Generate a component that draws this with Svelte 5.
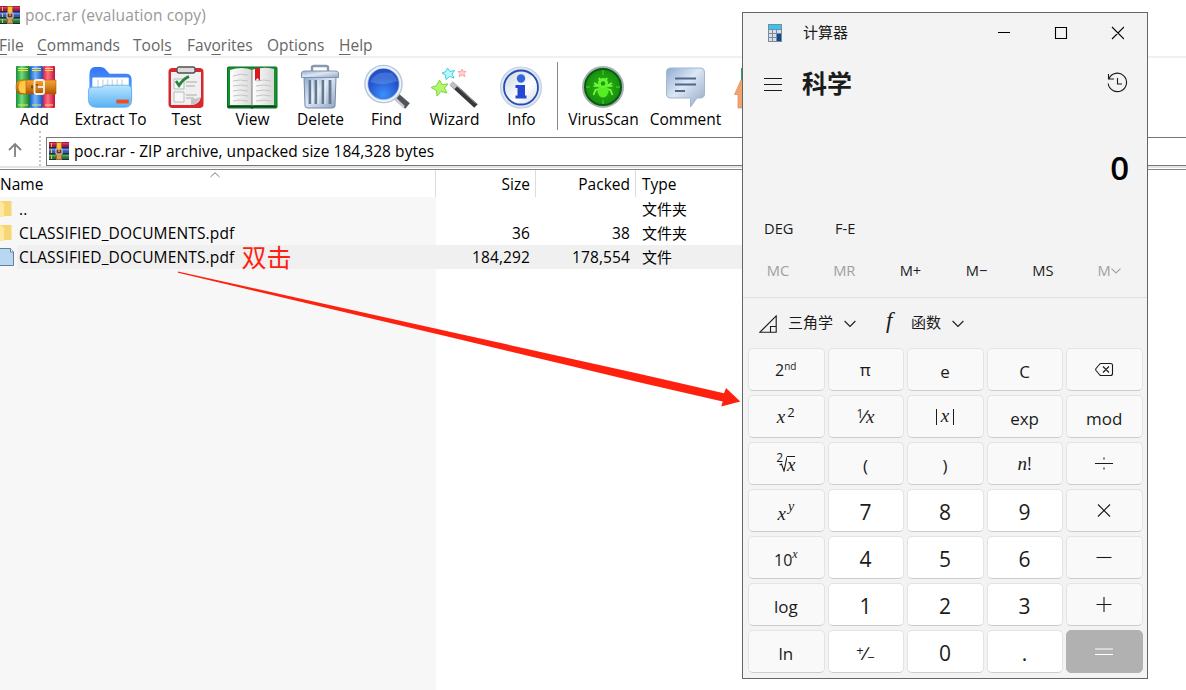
<script>
  const menu = [
    ['', 'F', 'ile', 38], ['', 'C', 'ommands', 96], ['Tool', 's', '', 54],
    ['Fav', 'o', 'rites', 80], ['Opti', 'o', 'ns', 72], ['', 'H', 'elp', 60],
  ];
  const tools = [
    { n: 'Add', w: 68 }, { n: 'Extract To', w: 84 }, { n: 'Test', w: 68 }, { n: 'View', w: 64 },
    { n: 'Delete', w: 72 }, { n: 'Find', w: 60 }, { n: 'Wizard', w: 76 }, { n: 'Info', w: 58 },
    { n: '|', w: 8 }, { n: 'VirusScan', w: 90 }, { n: 'Comment', w: 74 }, { n: '', w: 70 },
  ];
  const files = [
    { name: '..', size: '', packed: '', type: '文件夹', dir: true },
    { name: 'CLASSIFIED_DOCUMENTS.pdf', size: '36', packed: '38', type: '文件夹', dir: true },
    { name: 'CLASSIFIED_DOCUMENTS.pdf', size: '184,292', packed: '178,554', type: '文件', dir: false },
  ];
  const keys = [
    '2nd', 'π', 'e', 'C', 'back',
    'sq', 'inv', 'abs', 'exp', 'mod',
    'root', '(', ')', 'fact', 'div',
    'pow', '7', '8', '9', 'mul',
    'ten', '4', '5', '6', 'sub',
    'log', '1', '2', '3', 'add',
    'ln', 'neg', '0', '.', 'eq',
  ];
  const isNum = (k) => /^[0-9.]$/.test(k) || k === 'neg';
  const ops = {
    back: 'M9 4.5H18.5Q20.5 4.5 20.5 6V14.5Q20.5 16.5 18.5 16.5H9Q8.300 16.5 7.800 16L4 11.500Q3.300 10.500 4 9.500L7.800 5Q8.300 4.500 9 4.5ZM11 7.5L17 13.5M17 7.5L11 13.5',
    div: 'M3 10.5H21M12 4.4V6.4M12 14.6V16.6',
    mul: 'M6 4.5L18 16.5M18 4.5L6 16.5',
    sub: 'M4.5 10.5H19.5',
    add: 'M4.5 10.5H19.5M12 3V18',
    eq: 'M3 8H21M3 13.5H21',
  };
</script>

{#snippet books()}
  <svg class="books" viewBox="0 0 20 18">
    <rect width="20" height="6" fill="#a51845" /><rect y="1" width="20" height="1.5" fill="#d03867" />
    <rect y="6" width="20" height="6" fill="#3659b6" /><rect y="7" width="20" height="1.5" fill="#668de0" />
    <rect y="12" width="20" height="6" fill="#217537" /><rect y="13" width="20" height="1.5" fill="#58a55b" />
    <path d="M0 5.5H20M0 11.5H20M0 17.5H20" stroke="#222442" />
    <path d="M2.5 1V5M2.5 7V11M2.5 13V17" stroke="#efc438" />
    <rect x="7" y="0" width="6" height="18" fill="#a7662a" /><path d="M8 1H12V6H8Z" fill="#ffc629" />
    <path d="M7 7H13V12H7Z" fill="#6e371c" stroke="#ddd" /><path d="M10 6V10M8 14H12M8 16H12" stroke="#f5d28d" />
  </svg>
{/snippet}

{#snippet toolIcon(n)}
  <svg class="ticon" viewBox="0 0 48 44">
    {#if n === 'Add'}
      <rect x="6" y="1" width="14" height="42" rx="1" fill="url(#gr)" />
      <rect x="20" y="1" width="13" height="42" rx="1" fill="url(#bl)" />
      <rect x="33" y="1" width="12" height="42" rx="1" fill="url(#rd)" />
      <path d="M8 3.500H18M22 3.500H31M35 3.500H43M8 5.500H18M22 5.500H31M35 5.500H43M8 40H18M22 40H31M35 40H43" stroke="#f8df4b" stroke-width="1" />
      <path d="M10 15H46V29H10Q6 28 6 22Q6 16 10 15Z" fill="url(#or)" stroke="#ad610b" stroke-width=".6" />
      <path d="M10 16Q6 22 10 28L16 29V15Z" fill="#ffcb45" stroke="#a75d0d" stroke-width=".6" />
      <rect x="24.5" y="15" width="9.500" height="14" rx="2" fill="none" stroke="#f7eee0" stroke-width="1.900" />
      <path d="M28 22H35" stroke="#efefef" stroke-width="1.800" /><path d="M22 20.500V23.500M27 19V20.500" stroke="#633c12" stroke-width="1.6" />
    {:else if n === 'Extract To'}
      <g transform="translate(1.500 1) scale(.96)">
        <path d="M2 9Q2 1 8 1H13Q18 1 20 5L23 8H40Q46 8 46 14V36H2Z" fill="url(#fold)" />
        <rect x="5" y="12" width="38" height="20" rx="1" fill="#fff" />
        <path d="M11 14V23M16 14V23M21 14V23M26 14V23M31 14V23M36 14V23" stroke="#d3dde5" stroke-width="1.600" />
        <path d="M1 25Q1 22 5 22H13Q16 22 18 20H41Q46 20 46 25V35Q46 43 39 43H9Q1 43 1 35Z" fill="url(#sky)" stroke="#4c9fe4" stroke-width=".7" />
        <rect x="30" y="35" width="13" height="4" fill="#f24b22" />
      </g>
    {:else if n === 'Test'}
      <rect x="6.500" y="3" width="35" height="40" rx="4" fill="#d8272d" />
      <path d="M9 7H39V32Q37 40 29 40H9Z" fill="#f0f0f0" /><path d="M39 32Q34 34 29 34L29 40Q36 39 39 32Z" fill="#c4c4c4" />
      <rect x="15" y="2" width="18" height="6" rx="2" fill="#ddd" stroke="#564c4d" stroke-width="1.3" />
      <path d="M12 14H22V24H12ZM12 27H22V37H12Z" fill="#f7f7f7" stroke="#bbb" />
      <path d="M24 17H35M24 21H33M24 30H35M24 33H32" stroke="#aaa" /><path d="M14 16L17 20.500Q21 14 27 11.500" fill="none" stroke="#24843c" stroke-width="2.800" />
    {:else if n === 'View'}
      <rect x="-.5" y="2" width="49.500" height="41" rx="1" fill="#15912d" stroke="#086e22" />
      <path d="M2 5Q14 1 24 5V40H2Z" fill="url(#page)" /><path d="M24 5Q35 1 46 4V40H24Z" fill="url(#page)" />
      <path d="M0 41.500H23L24 43L26 41.500H48" fill="none" stroke="#163c1c" stroke-width="1.500" />
      <path d="M5 11Q12 8 20 10M5 16Q12 14 20 16M5 21Q12 19 20 21M5 26Q12 24 20 26M5 31Q12 29 20 31M5 36Q12 34 20 36M28 16Q36 14 43 16M28 21Q36 19 43 21M28 26Q36 24 43 26M28 31Q36 29 43 31M28 36Q36 34 43 36" fill="none" stroke="#c4c4c4" />
      <path d="M24 5V40" stroke="#777" /><path d="M27 3H32V16L29.5 13L27 16Z" fill="#d71920" />
    {:else if n === 'Delete'}
      <path d="M16 6V2.500Q16 1 18 1H30Q32 1 32 2.500V6" fill="none" stroke="#8997ad" stroke-width="2.400" />
      <path d="M8 12H40L39 41Q39 43 36 43H12Q9 43 9 41Z" fill="url(#steel)" stroke="#778aa2" />
      <path d="M14 15V39M20 15V39M27 15V39M34 15V39" stroke="#65788d" stroke-width="2.800" /><path d="M16 15V39M22 15V39M29 15V39" stroke="#f7fbff" />
      <path d="M5.500 8Q5.500 6 9 6H39Q42.500 6 42.500 8V12.500H5.500Z" fill="url(#steel)" stroke="#8393a9" />
    {:else if n === 'Find'}
      <path d="M34 31L45.500 41" stroke="#505358" stroke-width="7" /><path d="M33 33.500L42 42" stroke="#c8c9cc" stroke-width="2.500" />
      <circle cx="21.500" cy="19" r="17.3" fill="url(#lens)" stroke="#b3c6da" stroke-width="4" /><circle cx="21.500" cy="19" r="17" fill="none" stroke="#ebf4ff" stroke-width="1.8" />
      <path d="M8 17Q13 5 30 8L36 16Q22 22 8 17Z" fill="#86baff" opacity=".3" />
    {:else if n === 'Wizard'}
      <path d="M22 19L46 41" stroke="#37383b" stroke-width="5" /><path d="M23 17.500L46 38.500" stroke="#9b9b9b" /><path d="M21 18L26 22.500" stroke="#bec1c4" stroke-width="5" />
      <path d="M9.500 15L12 19.500L18 19L14.500 23L17 28L11 26.500L7 31L6.500 25.500L1 22.500L6.500 20.500Z" fill="#b6f56c" stroke="#76d83e" />
      <path d="M17.500 3L20 6.500L24.500 5.500L22 9L24 13L19.500 11.500L16 14.500L15.500 10L12 8L16 6.500Z" fill="#b6faff" stroke="#45cedc" />
      <path d="M32 4L33.200 6.500L36 6.500L34 8.500L35 11.500L32 10L29 11.500L30 8.500L28 6.500L31 6.500Z" fill="#ffd4d4" stroke="#ffa0a2" />
    {:else if n === 'Info'}
      <circle cx="24" cy="22.500" r="20.500" fill="#dfe7ef" stroke="#c4d0dc" stroke-width="1.2" /><circle cx="24" cy="22.500" r="17" fill="url(#pearl)" stroke="#254eb9" stroke-width="1.8" />
      <circle cx="24" cy="13.500" r="4.2" fill="#3567dc" /><path d="M18.500 20H28V30.500H29.500V33.500H18.500V30.500H20.500V23H18.500Z" fill="#2547d4" />
    {:else if n === 'VirusScan'}
      <circle cx="24" cy="22" r="19.2" fill="url(#virus)" stroke="#a8afb5" stroke-width="3.600" /><circle cx="24" cy="22" r="18" fill="none" stroke="#075e09" stroke-width="2" />
      <path d="M24 5V10M24 35V39M7 22H11M37 22H41" stroke="#48d334" />
      <path d="M20 13L21.500 16M28 13L26.500 16M15 18L20 21H14.500M14.500 30L16.500 25L20 24M33 18L28 21H33.500M33.500 30L31.500 25L28 24" stroke="#74ff39" stroke-width="1.700" fill="none" />
      <ellipse cx="24" cy="26" rx="5.500" ry="6.500" fill="#56ed24" /><circle cx="24" cy="18" r="5" fill="#65f52e" /><circle cx="24" cy="18.500" r="2.200" fill="#259716" />
    {:else if n === 'Comment'}
      <path d="M9 3H40Q43.500 3 43.500 7V29Q43.500 33 39 33H36L29.500 42V33H9Q5.500 33 5.500 29V7Q5.500 3 9 3Z" fill="url(#steel)" stroke="#a3b7d0" />
      <path d="M14 13.500H35M14 19.500H35M14 26H24" stroke="#50678a" stroke-width="1.800" />
    {:else}
      <rect x="8" y="3" width="15" height="16" fill="#2fa15f" /><path d="M1.500 29.500L8 15H18V43H5V29.500Z" fill="#f3a36b" stroke="#d98a62" stroke-width=".7" />
    {/if}
  </svg>
{/snippet}

<div class="desktop">
  <svg class="defs" width="0" height="0" aria-hidden="true">
    <defs>
      <linearGradient id="gr"><stop stop-color="#128f35" /><stop offset=".4" stop-color="#71dc7c" /><stop offset="1" stop-color="#11752e" /></linearGradient>
      <linearGradient id="bl"><stop stop-color="#1760cf" /><stop offset=".4" stop-color="#72b5ff" /><stop offset="1" stop-color="#1550b9" /></linearGradient>
      <linearGradient id="rd"><stop stop-color="#db1d4b" /><stop offset=".4" stop-color="#ff7186" /><stop offset="1" stop-color="#bd1339" /></linearGradient>
      <linearGradient id="or" x2="0" y2="1"><stop stop-color="#f7a432" /><stop offset=".5" stop-color="#d98219" /><stop offset="1" stop-color="#a95108" /></linearGradient>
      <linearGradient id="fold" x2="0" y2="1"><stop stop-color="#3377f4" /><stop offset="1" stop-color="#61adff" /></linearGradient>
      <linearGradient id="sky" x2="0" y2="1"><stop stop-color="#b8e5ff" /><stop offset="1" stop-color="#58b1f3" /></linearGradient>
      <linearGradient id="page"><stop stop-color="#fff" /><stop offset="1" stop-color="#d8d8d8" /></linearGradient>
      <linearGradient id="steel" x2="1" y2="1"><stop stop-color="#8eabd0" /><stop offset=".45" stop-color="#dce7f5" /><stop offset="1" stop-color="#91a6c3" /></linearGradient>
      <radialGradient id="lens" cy=".8"><stop stop-color="#3b91ff" /><stop offset="1" stop-color="#2450c7" /></radialGradient>
      <linearGradient id="pearl" x2="1" y2="1"><stop stop-color="#c9d4df" /><stop offset=".6" stop-color="#fff" /><stop offset="1" stop-color="#cfd7dd" /></linearGradient>
      <radialGradient id="virus"><stop stop-color="#35b516" /><stop offset="1" stop-color="#118d0d" /></radialGradient>
    </defs>
  </svg>

  <section class="archive">
    <header class="title">{@render books()}<span>poc.rar (evaluation copy)</span></header>
    <nav class="menu">
      {#each menu as [a, u, b, w]}<span style:width="{w}px">{a}<u>{u}</u>{b}</span>{/each}
    </nav>
    <div class="toolbar">
      {#each tools as t}
        {#if t.n === '|'}<i class="sep"></i>
        {:else}<div class="tool" style:width="{t.w}px">{@render toolIcon(t.n)}<span>{t.n}</span></div>{/if}
      {/each}
    </div>
    <div class="address">
      <svg class="up" viewBox="0 0 16 16"><path d="M8 15V2M2 8L8 2L14 8" /></svg>
      <i class="grip"></i>
      <div class="path">{@render books()}<span>poc.rar - ZIP archive, unpacked size 184,328 bytes</span></div>
    </div>
    <div class="rule"></div>
    <div class="row head">
      <span class="hname">Name<svg viewBox="0 0 10 6"><path d="M.5 5L5 .7L9.5 5" /></svg></span>
      <span class="num">Size</span><span class="num">Packed</span><span class="type">Type</span>
    </div>
    <div class="list">
      {#each files as f}
        <div class="row" class:sel={!f.dir}>
          <span class="name">
            {#if f.dir}
              <svg class="ficon" viewBox="0 0 17 24"><path d="M0 4H11.5V19H0Z" fill="#f7d774" /><path d="M0 4L4 7V20H0Z" fill="#ffe9a2" /></svg>
            {:else}
              <svg class="ficon" viewBox="0 0 17 24"><path d="M-1 3.5H10.5L13.5 7V20.5H-1Z" fill="#b9d7f1" stroke="#61809b" /><path d="M10.5 3.5V7H13.5" fill="#fff" stroke="#61809b" /></svg>
            {/if}
            <b>{f.name}</b>{#if !f.dir}<em>双击</em>{/if}
          </span>
          <span class="num">{f.size}</span><span class="num">{f.packed}</span><span class="type cjk">{f.type}</span>
        </div>
      {/each}
    </div>
  </section>

  <svg class="arrow" viewBox="0 0 1186 690"><path d="M178 271.5L460 334L640 374L724 393.2L726 388L740.3 401.4L721.3 406.5L722.7 401.6L640 382.4L460 339.5L178 272.7Z" fill="#ff2110" /></svg>

  <section class="calc">
    <header class="cbar">
      <svg class="cicon" viewBox="0 0 14 18"><rect width="14" height="18" fill="#7c8b98" /><rect x="1" y="1" width="12" height="4" fill="#36c4f5" /><path d="M1 6H4V9H1ZM5 6H8V9H5ZM9 6H13V9H9ZM1 10H4V13H1ZM5 10H8V13H5ZM1 14H4V17H1ZM5 14H8V17H5Z" fill="#d6dfe7" /><path d="M9 10H13V17H9Z" fill="#0c4a94" /></svg>
      <span>计算器</span>
      <svg class="win" viewBox="0 0 126 14"><path d="M0 6.5H12M57.5 1.5H68.5V12.5H57.5ZM114 1L126 13M126 1L114 13" /></svg>
    </header>
    <div class="mode">
      <svg class="burger" viewBox="0 0 18 14"><path d="M0 1.5H18M0 7.5H18M0 13.5H18" /></svg>
      <h1>科学</h1>
      <svg class="hist" viewBox="0 0 21 21"><path d="M1.5 1V6H7M2 5.5A9.2 9.2 0 1 1 1.2 10.5M10.5 5V11H15" /></svg>
    </div>
    <div class="result">0</div>
    <div class="angle"><span>DEG</span><span>F-E</span></div>
    <div class="memory">
      <span class="off">MC</span><span class="off">MR</span><span>M+</span><span>M−</span><span>MS</span>
      <span class="off">M<svg viewBox="0 0 10 6"><path d="M.5 .7L5 5L9.5 .7" /></svg></span>
    </div>
    <div class="groups">
      <svg class="tri" viewBox="0 0 18 18"><path d="M.9 17.2L17.2 .9V17.2ZM11.5 17V11.5H17" /></svg>
      <span class="g1">三角学</span><svg class="chev" viewBox="0 0 12 8"><path d="M.6 1L6 6.5L11.4 1" /></svg>
      <i>f</i><span class="g2">函数</span><svg class="chev" viewBox="0 0 12 8"><path d="M.6 1L6 6.5L11.4 1" /></svg>
    </div>
    <div class="keys">
      {#each keys as k}
        <div class="key" class:white={isNum(k)} class:eq={k === 'eq'} class:low={['e', 'C', 'exp', 'mod', '(', ')', 'log', 'ln'].includes(k)}>
          {#if ops[k]}<svg class="op" viewBox="0 0 24 21"><path d={ops[k]} /></svg>
          {:else if k === '2nd'}<span class="m">2<sup class="nd">nd</sup></span>
          {:else if k === 'sq'}<span class="m"><i>x</i><sup class="two">2</sup></span>
          {:else if k === 'inv'}<span class="m inv"><sup>1</sup><s>/</s><i>x</i></span>
          {:else if k === 'abs'}<span class="m abs"><i>x</i></span>
          {:else if k === 'root'}<span class="m root"><sup>2</sup><svg viewBox="0 0 8 16"><path d="M.5 9L2.5 8L5 15L8 .8" /></svg><i class="bar">x</i></span>
          {:else if k === 'fact'}<span class="m fact"><i>n</i>!</span>
          {:else if k === 'pow'}<span class="m"><i>x</i><sup class="y"><i>y</i></sup></span>
          {:else if k === 'ten'}<span class="m">10<sup class="x"><i>x</i></sup></span>
          {:else if k === 'neg'}<span class="neg"><sup>+</sup><s>/</s><sub>−</sub></span>
          {:else}<span>{k}</span>{/if}
        </div>
      {/each}
    </div>
  </section>
</div>

<style>
  :global(body) { background: #fff; }
  .desktop { position: relative; width: 1186px; height: 690px; overflow: hidden; font: 15.5px/20px "Open Sans", "Noto Sans", "Noto Sans CJK SC", sans-serif; color: #000; white-space: nowrap; }
  .desktop * { box-sizing: border-box; }
  .defs { position: absolute; }
  svg { display: block; flex: none; }
  .archive { display: flex; flex-direction: column; height: 690px; }
  .books { width: 20px; height: 18px; }
  .title { display: flex; height: 30px; align-items: center; gap: 5px; color: #999; padding-bottom: 1px; }
  .title span { letter-spacing: .11px; }
  .menu { display: flex; height: 28px; padding: 6px 0 0; margin-left: -1px; color: #666; border-bottom: 2px solid #f0f0f0; }
  .menu span { margin-top: -1px; letter-spacing: .02px; }
  .menu u { text-underline-offset: 3px; text-decoration-thickness: 1px; }
  .toolbar { display: flex; height: 79px; padding-top: 6px; }
  .tool { display: flex; flex-direction: column; align-items: center; flex: none; }
  .tool span { padding-left: 1px; }
  .ticon { width: 48px; height: 44px; overflow: visible; margin: 1px 0 0; }
  .sep { width: 8px; height: 68px; border-left: 1px solid #888; margin-left: 7px; margin-right: -7px; margin-top: -2px; flex: none; }
  .address { display: flex; height: 29px; }
  .up { width: 16px; height: 16px; margin: 5px 22px 0 7px; fill: none; stroke: #808080; stroke-width: 1.8; }
  .up, .chev, .hist { overflow: visible; }
  .grip { width: 2px; margin: -6px 5px 0 -6px; border-left: 2px dotted #c8c8c8; }
  .path { flex: 1; display: flex; align-items: center; gap: 5px; border: 1px solid #777; border-right: 0; padding: 0 0 1px 2px; letter-spacing: .05px; }
  .rule { height: 4px; border-top: 2px solid #e4e4e4; border-bottom: 1px solid #7e858d; }
  .row { display: flex; height: 24px; align-items: center; }
  .head { height: 27px; }
  .hname { width: 436px; height: 27px; line-height: 29px; border-right: 1px solid #ddd; display: flex; }
  .hname svg { width: 10px; height: 6px; margin: 2px 0 0 167px; fill: none; stroke: #777; }
  .head .num { height: 27px; line-height: 29px; border-right: 1px solid #ddd; }
  .num { width: 100px; text-align: right; padding-right: 5px; flex: none; }
  .list .num { padding-right: 6px; letter-spacing: .12px; }
  .type { padding-left: 6px; }
  .cjk { font: 400 15px/20px "Noto Sans CJK SC", sans-serif; }
  .list { flex: 1; background: linear-gradient(90deg, #f7f7f7 436px, #fff 436px); }
  .sel { background: linear-gradient(90deg, transparent 17px, #f0f0f0 17px, #f0f0f0 1000px, transparent 1000px); }
  .name { display: flex; width: 436px; align-items: center; }
  .name b { font-weight: 400; padding-left: 2px; letter-spacing: .15px; }
  .ficon { width: 17px; height: 24px; }
  .name em { color: #ff2110; font: 400 25px/24px "Noto Sans CJK SC", sans-serif; margin: -2px 0 0 7px; }
  .arrow { position: absolute; inset: 0; width: 1186px; height: 690px; }

  .calc { position: absolute; left: 742px; top: 12px; width: 406px; height: 667px; background: #f3f3f3; border: 1px solid #666; display: flex; flex-direction: column; color: #1b1b1b; font-size: 15px; }
  .calc svg { fill: none; stroke: currentColor; stroke-width: 1.1; }
  .cbar { display: flex; height: 41px; align-items: center; padding: 0 0 1px 25px; }
  .calc .cicon { width: 14px; height: 18px; stroke: none; }
  .cbar span { font: 400 15px/20px "Noto Sans CJK SC", sans-serif; margin: -2px 0 0 21px; }
  .win { width: 126px; height: 14px; margin-left: 150px; color: #000; }
  .mode { display: flex; align-items: center; height: 59px; padding-left: 21px; }
  .burger { width: 18px; height: 14px; }
  h1 { font: 700 25px/32px "Noto Sans CJK SC", sans-serif; margin: -4px 0 0 20px; width: 51px; }
  .hist { width: 21px; height: 21px; margin-left: 254px; }
  .result { height: 84px; padding: 38px 18px 0 0; text-align: right; font: 600 33px/34px "Open Sans", sans-serif; color: #000; }
  .angle { display: flex; height: 60px; padding: 21px 0 0 21px; }
  .angle span { width: 71px; font-size: 14.7px; }
  .memory { display: grid; grid-template-columns: repeat(6, 66.2px); height: 41px; padding: 3px 0 0 2px; border-bottom: 1px solid #e0e0e0; font-size: 14.7px; text-align: center; }
  .memory svg { display: inline-block; width: 10px; height: 6px; vertical-align: 2px; }
  .off { color: #a0a0a0; }
  .groups { display: flex; align-items: center; height: 51px; padding-left: 16px; }
  .tri { width: 18px; height: 18px; }
  .groups span { font: 400 15px/20px "Noto Sans CJK SC", sans-serif; margin-top: -3px; }
  .groups .g1 { margin-left: 11px; margin-right: 11px; }
  .groups .g2 { margin-left: 14px; margin-right: 11px; }
  .chev { width: 12px; height: 8px; margin-top: 1px; }
  .groups i { font: italic 23px/24px "Liberation Serif", serif; margin: -5px 0 0 30px; width: 11px; }
  .keys { display: grid; grid-template-columns: repeat(5, 1fr); grid-template-rows: repeat(7, 1fr); gap: 4px 3px; height: 325px; margin: -1px 4px 0 5px; }
  .key { display: flex; justify-content: center; align-items: center; background: #f9f9f9; border: 1px solid #e3e3e3; border-bottom-color: #cbcbcb; border-radius: 5px; font-size: 17px; padding-right: 1px; }
  .low { padding-top: 4px; }
  .white { background: #fff; font-size: 21px; padding-top: 2px; }
  .eq { background: #b1b1b1; border-color: #b1b1b1; color: #fff; }
  .op { width: 24px; height: 21px; }
  .key i { font: italic 19px/20px "Liberation Serif", serif; }
  .m { font-size: 16px; }
  s { text-decoration: none; }
  sup, sub { line-height: 0; }
  .nd { font-size: 10px; vertical-align: 6px; }
  .two { font-size: 13px; margin-left: 2px; vertical-align: 6px; }
  .inv sup { font-size: 12px; vertical-align: 5px; margin-right: -2px; }
  .inv s { display: inline-block; font-size: 18px; line-height: 18px; transform: skewX(-16deg); margin-right: -2px; }
  .abs { border: solid #1b1b1b; border-width: 0 1px; height: 16px; line-height: 13px; padding: 0 4px; }
  .key .abs i { line-height: 13px; }
  .fact { font-size: 18px; }
  .root { display: flex; align-items: center; }
  .root sup { font-size: 12px; margin: -11px -4px 0 0; }
  .root svg { width: 8px; height: 16px; }
  .key .bar { border-top: 1px solid #1b1b1b; line-height: 15px; height: 16px; }
  .key .y i { font-size: 14px; vertical-align: 3px; margin-left: 2px; }
  .key .x i { font-size: 12px; vertical-align: 2px; }
  .neg { font-size: 20px; }
  .neg sup { font-size: 13px; vertical-align: 5px; margin-right: -2px; }
  .neg s { display: inline-block; font-size: 18px; line-height: 18px; transform: skewX(-12deg); margin-right: -1px; }
  .neg sub { font-size: 13px; vertical-align: -2px; }
</style>
